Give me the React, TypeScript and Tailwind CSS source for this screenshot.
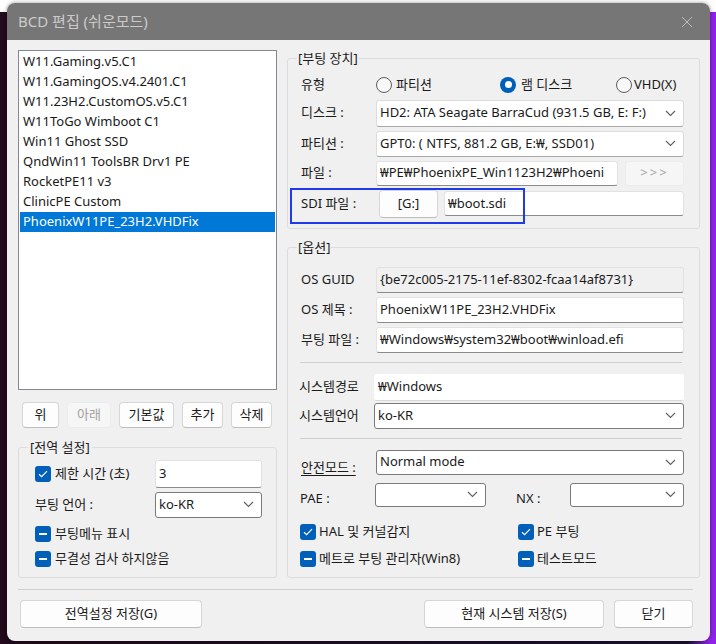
import React from 'react';

const Chevron = () => (
  <svg width="11" height="7" viewBox="0 0 11 7" className="shrink-0">
    <path d="M1 1l4.5 4.5L10 1" fill="none" stroke="#5f5f5f" strokeWidth="1.1" />
  </svg>
);

const Select = ({ value = '', className = '', dark = false }: { value?: string; className?: string; dark?: boolean }) => (
  <div
    className={`flex items-center justify-between bg-white rounded-[3px] border pl-[3px] pr-[7px] ${
      dark ? 'border-[#7a7a7a]' : 'border-[#dcdcdc] border-b-[#a8a8a8]'
    } ${className}`}
  >
    <span className="truncate">{value}</span>
    <Chevron />
  </div>
);

const Input = ({ value = '', className = '', readOnly = false }: { value?: string; className?: string; readOnly?: boolean }) => (
  <div
    className={`flex items-center rounded-[3px] border border-[#e2e2e2] border-b-[#8a8a8a] pl-[3px] overflow-hidden whitespace-nowrap ${
      readOnly ? 'bg-[#f0f0f0]' : 'bg-white'
    } ${className}`}
  >
    {value}
  </div>
);

const Button = ({ children, className = '', disabled = false }: { children: React.ReactNode; className?: string; disabled?: boolean }) => (
  <div
    className={`flex items-center justify-center rounded-[4px] border ${
      disabled ? 'bg-[#f6f6f6] border-[#ececec] text-[#a2a2a2]' : 'bg-[#fdfdfd] border-[#d6d6d6] border-b-[#bdbdbd]'
    } ${className}`}
  >
    {children}
  </div>
);

const Check = ({ mixed = false }: { mixed?: boolean }) => (
  <div className="w-[16px] h-[16px] rounded-[3px] bg-[#005fb8] flex items-center justify-center shrink-0">
    {mixed ? (
      <div className="w-[8px] h-[2px] bg-white" />
    ) : (
      <svg width="10" height="8" viewBox="0 0 10 8">
        <path d="M1 4.2l2.6 2.4L9 1.2" fill="none" stroke="white" strokeWidth="1.2" />
      </svg>
    )}
  </div>
);

const Radio = ({ checked = false }: { checked?: boolean }) =>
  checked ? (
    <div className="w-[16px] h-[16px] rounded-full bg-[#005fb8] flex items-center justify-center shrink-0">
      <div className="w-[7px] h-[7px] rounded-full bg-white" />
    </div>
  ) : (
    <div className="w-[16px] h-[16px] rounded-full border border-[#5c5c5c] bg-[#f8f8f8] shrink-0" />
  );

const Row = ({ label, children, className = '', labelClass = '' }: { label: string; children: React.ReactNode; className?: string; labelClass?: string }) => (
  <div className={`flex items-center ${className}`}>
    <div className={`w-[75px] shrink-0 ${labelClass}`}>{label}</div>
    <div className="flex-1 flex">{children}</div>
  </div>
);

const items = [
  'W11.Gaming.v5.C1',
  'W11.GamingOS.v4.2401.C1',
  'W11.23H2.CustomOS.v5.C1',
  'W11ToGo Wimboot C1',
  'Win11 Ghost SSD',
  'QndWin11 ToolsBR Drv1 PE',
  'RocketPE11 v3',
  'ClinicPE Custom',
  'PhoenixW11PE_23H2.VHDFix',
];

export default function App() {
  return (
    <div className="relative w-[716px] h-[644px] bg-white overflow-hidden text-[13px] text-[#1a1a1a] font-['Noto_Sans','Noto_Sans_CJK_KR',sans-serif]">
      <div className="absolute top-[12px] left-0 right-0 bottom-0 bg-[linear-gradient(90deg,#230a1c_0%,#1a1030_96%,#8e22e6_99%)]" />
      <div className="absolute left-[7px] top-[3px] w-[703px] h-[638px] rounded-[8px] overflow-hidden bg-[#f0f0f0] flex flex-col shadow-[0_0_4px_rgba(0,0,0,0.4)]">
        {/* title bar */}
        <div className="h-[37px] shrink-0 bg-[#767676] flex items-center justify-between pl-[11px] pr-[17px]">
          <span className="text-[15px] text-[#cbcbcb]">BCD 편집 (쉬운모드)</span>
          <svg width="12" height="12" viewBox="0 0 12 12">
            <path d="M1 1l10 10M11 1L1 11" stroke="#bdbdbd" strokeWidth="1" />
          </svg>
        </div>

        <div className="flex-1 flex flex-col pl-[11px] pr-[10px] pt-[9px]">
          <div className="flex gap-[10px]">
            {/* left column */}
            <div className="w-[259px] shrink-0 flex flex-col">
              <div className="mt-[1px] h-[340px] border border-[#828790] bg-white p-[1px]">
                {items.map((it, i) => (
                  <div
                    key={it}
                    className={`h-[20px] flex items-center pl-[3px] ${i === items.length - 1 ? 'bg-[#0078d7] text-white' : ''}`}
                  >
                    {it}
                  </div>
                ))}
              </div>
              <div className="mt-[12px] flex gap-[8px] pl-[4px] h-[26px]">
                <Button className="w-[37px]">위</Button>
                <Button className="w-[44px]" disabled>아래</Button>
                <Button className="w-[55px]">기본값</Button>
                <Button className="w-[41px]">추가</Button>
                <Button className="w-[41px]">삭제</Button>
              </div>
              <fieldset className="mt-[10px] h-[140px] border border-[#dcdcdc] rounded-[3px]">
                <legend className="ml-[9px] px-[2px]">[전역 설정]</legend>
                <div className="pl-[16px] pr-[14px]">
                  <div className="mt-[2px] h-[28px] flex items-center">
                    <div className="w-[120px] flex items-center gap-[4px]">
                      <Check />
                      <span>제한 시간 (초)</span>
                    </div>
                    <Input value="3" className="flex-1 h-[28px] items-start pt-[3px]" />
                  </div>
                  <div className="mt-[4px] h-[26px] flex items-center">
                    <div className="w-[120px]">부팅 언어 :</div>
                    <Select value="ko-KR" dark className="flex-1 h-[26px]" />
                  </div>
                  <div className="mt-[6px] h-[20px] flex items-center gap-[4px]">
                    <Check mixed />
                    <span>부팅메뉴 표시</span>
                  </div>
                  <div className="mt-[5px] h-[20px] flex items-center gap-[4px]">
                    <Check mixed />
                    <span>무결성 검사 하지않음</span>
                  </div>
                </div>
              </fieldset>
            </div>

            {/* right column */}
            <div className="w-[413px] shrink-0 flex flex-col">
              <fieldset className="h-[180px] border border-[#dcdcdc] rounded-[3px]">
                <legend className="ml-[9px] px-[1px]">[부팅 장치]</legend>
                <div className="pl-[13px] pr-[15px]">
                  <Row label="유형" className="mt-[5px] h-[22px]">
                    <div className="flex items-center gap-[4px] w-[124px]">
                      <Radio />
                      <span>파티션</span>
                    </div>
                    <div className="flex items-center gap-[5px] w-[116px]">
                      <Radio checked />
                      <span>램 디스크</span>
                    </div>
                    <div className="flex items-center gap-[2px]">
                      <Radio />
                      <span>VHD(X)</span>
                    </div>
                  </Row>
                  <Row label="디스크 :" className="mt-[4px]">
                    <Select value="HD2: ATA Seagate BarraCud (931.5 GB, E: F:)" className="flex-1 h-[27px]" />
                  </Row>
                  <Row label="파티션 :" className="mt-[4px]">
                    <Select value="GPT0: ( NTFS, 881.2 GB, E:₩, SSD01)" className="flex-1 h-[26px]" />
                  </Row>
                  <Row label="파일 :" className="mt-[4px]">
                    <Input value="₩PE₩PhoenixPE_Win1123H2₩Phoeni" className="w-[242px] h-[25px]" />
                    <Button disabled className="ml-[7px] flex-1 h-[25px] tracking-[2px]">&gt;&gt;&gt;</Button>
                  </Row>
                  <div className="relative mt-[4px] flex items-center h-[28px]">
                    <div className="w-[78px] shrink-0">SDI 파일 :</div>
                    <Button className="w-[59px] h-[28px]">[G:]</Button>
                    <Input value="₩boot.sdi" className="ml-[6px] flex-1 h-[25px] pl-[2px]" />
                    <div className="absolute left-[-11px] top-[-2px] w-[235px] h-[36px] border-2 border-[#1f3ae8]" />
                  </div>
                </div>
              </fieldset>

              <fieldset className="mt-[9px] h-[340px] border border-[#dcdcdc] rounded-[3px]">
                <legend className="ml-[9px] px-[1px]">[옵션]</legend>
                <div className="pl-[13px] pr-[15px]">
                  <Row label="OS GUID" className="mt-[9px]">
                    <Input readOnly value="{be72c005-2175-11ef-8302-fcaa14af8731}" className="flex-1 h-[26px]" />
                  </Row>
                  <Row label="OS 제목 :" className="mt-[4px]">
                    <Input value="PhoenixW11PE_23H2.VHDFix" className="flex-1 h-[26px]" />
                  </Row>
                  <Row label="부팅 파일 :" className="mt-[4px]">
                    <Input value="₩Windows₩system32₩boot₩winload.efi" className="flex-1 h-[26px]" />
                  </Row>
                  <div className="mt-[9px] h-px bg-[#cfcfcf] -ml-px mr-[2px]" />
                  <Row label="시스템경로" className="mt-[11px]" labelClass="-ml-[2px]">
                    <Input value="₩Windows" className="flex-1 h-[27px] border-white border-b-[#d8d8d8]" />
                  </Row>
                  <Row label="시스템언어" className="mt-[2px]" labelClass="-ml-[2px]">
                    <Select value="ko-KR" dark className="flex-1 h-[26px]" />
                  </Row>
                  <div className="mt-[9px] h-px bg-[#cfcfcf] -ml-px mr-[2px]" />
                  <Row label="안전모드 :" className="mt-[11px]" labelClass="translate-y-[6px] underline underline-offset-[3px]">
                    <Select value="Normal mode" dark className="flex-1 h-[25px]" />
                  </Row>
                  <div className="mt-[8px] flex items-center">
                    <div className="w-[75px] translate-y-[4px] -ml-px">PAE :</div>
                    <Select dark className="w-[111px] h-[24px]" />
                    <div className="w-[84px] pl-[30px] translate-y-[4px]">NX :</div>
                    <Select dark className="flex-1 h-[24px]" />
                  </div>
                  <div className="mt-[15px] h-[20px] flex items-center -ml-px">
                    <div className="w-[218px] flex items-center gap-[3px]">
                      <Check />
                      <span>HAL 및 커널감지</span>
                    </div>
                    <div className="flex items-center gap-[3px]">
                      <Check />
                      <span>PE 부팅</span>
                    </div>
                  </div>
                  <div className="mt-[7px] h-[20px] flex items-center -ml-px">
                    <div className="w-[218px] flex items-center gap-[3px]">
                      <Check mixed />
                      <span>메트로 부팅 관리자(Win8)</span>
                    </div>
                    <div className="flex items-center gap-[3px]">
                      <Check mixed />
                      <span>테스트모드</span>
                    </div>
                  </div>
                </div>
              </fieldset>
            </div>
          </div>

          <div className="mt-[11px] h-px bg-[#cfcfcf] mr-[7px]" />
          <div className="mt-[10px] flex h-[28px] pl-[2px] pr-[7px]">
            <Button className="w-[182px]">전역설정 저장(G)</Button>
            <div className="flex-1" />
            <Button className="w-[180px]">현재 시스템 저장(S)</Button>
            <Button className="ml-[10px] w-[79px]">닫기</Button>
          </div>
        </div>
      </div>
    </div>
  );
}
